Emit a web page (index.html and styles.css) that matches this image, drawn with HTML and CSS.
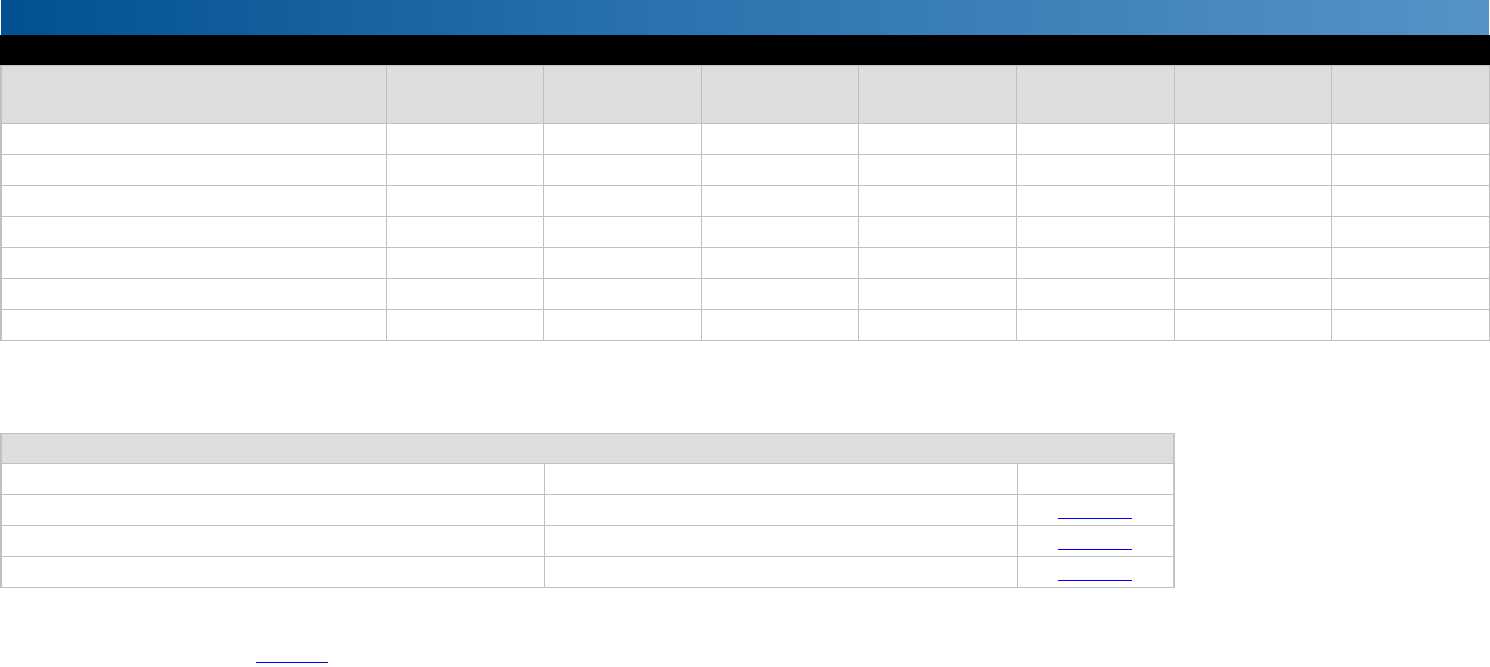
FILE: index.html
```html
<!DOCTYPE html>
<html>
<head>
    <title>Report</title>
    <meta name="viewport" content="width=device-width, initial-scale=1">
    <link rel="stylesheet" href="styles.css">
</head>
<body>
    <div class="banner"></div>
    <div class="menu-bar"></div>

    <table class="grid summary">
        <colgroup>
            <col class="col-name">
            <col><col><col><col><col><col><col>
        </colgroup>
        <thead>
            <tr class="head-row">
                <th></th><th></th><th></th><th></th><th></th><th></th><th></th><th></th>
            </tr>
        </thead>
        <tbody>
            <tr><td></td><td></td><td></td><td></td><td></td><td></td><td></td><td></td></tr>
            <tr><td></td><td></td><td></td><td></td><td></td><td></td><td></td><td></td></tr>
            <tr><td></td><td></td><td></td><td></td><td></td><td></td><td></td><td></td></tr>
            <tr><td></td><td></td><td></td><td></td><td></td><td></td><td></td><td></td></tr>
            <tr><td></td><td></td><td></td><td></td><td></td><td></td><td></td><td></td></tr>
            <tr><td></td><td></td><td></td><td></td><td></td><td></td><td></td><td></td></tr>
            <tr><td></td><td></td><td></td><td></td><td></td><td></td><td></td><td></td></tr>
        </tbody>
    </table>

    <table class="grid files">
        <colgroup>
            <col class="col-file">
            <col class="col-desc">
            <col class="col-action">
        </colgroup>
        <thead>
            <tr class="title-row"><th colspan="3"></th></tr>
        </thead>
        <tbody>
            <tr><td></td><td></td><td></td></tr>
            <tr><td></td><td></td><td><div class="link-cell"><a href="#" class="blank-link"></a></div></td></tr>
            <tr><td></td><td></td><td><div class="link-cell"><a href="#" class="blank-link"></a></div></td></tr>
            <tr><td></td><td></td><td><div class="link-cell"><a href="#" class="blank-link"></a></div></td></tr>
        </tbody>
    </table>

    <div class="footer">
        <a href="#" class="blank-link footer-link"></a>
    </div>
</body>
</html>
```

FILE: styles.css
```css
body {
    margin: 0;
    font-family: 'Liberation Sans', Arial, sans-serif;
    font-size: 13px;
    background-color: #ffffff;
    color: #000000;
}
.banner {
    height: 35px;
    margin: 0 1px;
    background: linear-gradient(to right, #02508f, #2a73ae 45%, #5593c8);
}
.menu-bar {
    height: 30px;
    background-color: #000000;
}
.grid {
    border-collapse: collapse;
    table-layout: fixed;
    border: 1px solid #c0c0c0;
    border-left-width: 2px;
}
.grid th,
.grid td {
    border: 1px solid #c0c0c0;
    padding: 0;
    height: 30px;
}
.grid th {
    background-color: #dddddd;
}
.summary {
    width: 1490px;
    border-top: 0;
}
.col-name {
    width: 385px;
}
.summary .head-row th {
    height: 57px;
}
.files {
    width: 1175px;
    margin-top: 92px;
    border-right: 2px solid #c4c4c4;
}
.col-file {
    width: 543px;
}
.col-desc {
    width: 473px;
}
.title-row th {
    height: 29px;
}
.link-cell {
    display: flex;
    justify-content: center;
    align-items: flex-end;
    height: 30px;
    padding-bottom: 6px;
    box-sizing: border-box;
}
.blank-link {
    display: inline-block;
    width: 74px;
    height: 14px;
    border-bottom: 1px solid #0000ee;
}
.footer {
    display: flex;
    padding-left: 256px;
    margin-top: 60px;
}
.footer-link {
    width: 72px;
}
```
